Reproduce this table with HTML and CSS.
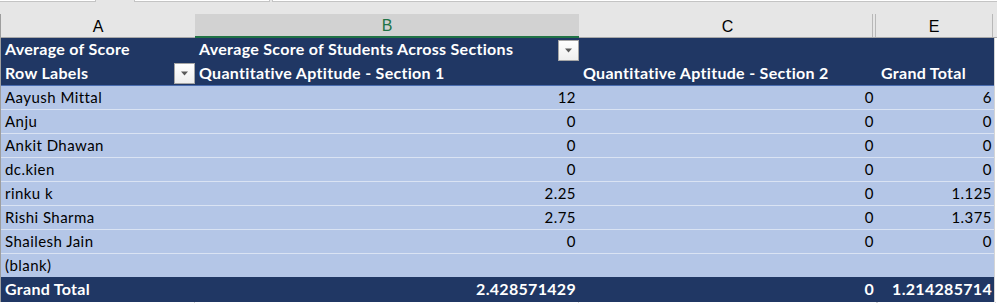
FILE: index.html
```html
<!DOCTYPE html>
<html>
<head>
<meta charset="utf-8">
<link rel="stylesheet" href="styles.css">
</head>
<body>
<div class="sheet">
  <div class="topstrip">
    <span class="tab t1"></span><span class="tabgap g1"></span><span class="tab t2"></span><span class="tabgap g2"></span><span class="tab t3"></span>
  </div>
  <div class="colheads">
    <div class="ch ca">A</div>
    <div class="ch cb sel">B</div>
    <div class="ch cc">C</div>
    <div class="ch cd"></div>
    <div class="ch ce">E</div>
    <div class="ch crest"></div>
  </div>
  <div class="pivot">
    <div class="row head">
      <div class="cell a">Average of Score</div>
      <div class="cell b split"><span class="lbl">Average Score of Students Across Sections</span><span class="dd"><svg width="9" height="5" viewBox="0 0 9 5"><path d="M1 0.5 L8 0.5 L4.5 4.5 Z" fill="#5a5a5a"/></svg></span></div>
      <div class="cell c"></div>
      <div class="cell e"></div>
    </div>
    <div class="row head head2">
      <div class="cell a split"><span class="lbl">Row Labels</span><span class="dd"><svg width="9" height="5" viewBox="0 0 9 5"><path d="M1 0.5 L8 0.5 L4.5 4.5 Z" fill="#5a5a5a"/></svg></span></div>
      <div class="cell b">Quantitative Aptitude - Section 1</div>
      <div class="cell c">Quantitative Aptitude - Section 2</div>
      <div class="cell e">Grand Total</div>
    </div>
    <div class="row data">
      <div class="cell a">Aayush Mittal</div><div class="cell b num">12</div><div class="cell c num">0</div><div class="cell e num">6</div>
    </div>
    <div class="row data">
      <div class="cell a">Anju</div><div class="cell b num">0</div><div class="cell c num">0</div><div class="cell e num">0</div>
    </div>
    <div class="row data">
      <div class="cell a">Ankit Dhawan</div><div class="cell b num">0</div><div class="cell c num">0</div><div class="cell e num">0</div>
    </div>
    <div class="row data">
      <div class="cell a">dc.kien</div><div class="cell b num">0</div><div class="cell c num">0</div><div class="cell e num">0</div>
    </div>
    <div class="row data">
      <div class="cell a">rinku k</div><div class="cell b num">2.25</div><div class="cell c num">0</div><div class="cell e num">1.125</div>
    </div>
    <div class="row data">
      <div class="cell a">Rishi Sharma</div><div class="cell b num">2.75</div><div class="cell c num">0</div><div class="cell e num">1.375</div>
    </div>
    <div class="row data">
      <div class="cell a">Shailesh Jain</div><div class="cell b num">0</div><div class="cell c num">0</div><div class="cell e num">0</div>
    </div>
    <div class="row data last">
      <div class="cell a">(blank)</div><div class="cell b num"></div><div class="cell c num"></div><div class="cell e num"></div>
    </div>
    <div class="row total">
      <div class="cell a">Grand Total</div><div class="cell b num">2.428571429</div><div class="cell c num">0</div><div class="cell e num">1.214285714</div>
    </div>
  </div>
  <div class="below">
    <div class="ba"></div><div class="bb"></div><div class="bc"></div><div class="bd"></div><div class="be"></div>
  </div>
</div>
</body>
</html>
```

FILE: styles.css
```css
html, body {
  margin: 0;
  padding: 0;
  background: #ffffff;
}
.sheet {
  width: 997px;
  height: 303px;
  overflow: hidden;
  font-family: "Lato", "Open Sans", sans-serif;
  font-size: 15px;
  letter-spacing: 0.45px;
  color: #000;
}
.topstrip {
  display: flex;
  height: 14px;
  background: #e6e6e6;
}
.tab {
  height: 1px;
  background: #ffffff;
  border: 1px solid #c4c4c4;
  border-top: none;
}
.t1 { width: 95px; border-left: none; }
.g1 { width: 38px; }
.t2 { width: 134px; }
.g2 { width: 2px; }
.t3 { flex: 1; border-right: none; }
.colheads {
  display: flex;
  height: 23px;
  background: #e6e6e6;
  border-bottom: 1px solid #a8a8a8;
  border-left: 1px solid #9e9e9e;
  font-family: "Liberation Sans", Arial, sans-serif;
  font-size: 16px;
  letter-spacing: 0;
}
.ch {
  display: flex;
  align-items: center;
  justify-content: center;
  padding-top: 2px;
  box-sizing: border-box;
}
.ca { width: 194px; }
.cb { width: 384px; }
.sel {
  background: #d2d2d2;
  color: #217346;
  border-bottom: 2px solid #217346;
  margin-bottom: -1px;
}
.cc { width: 294px; border-right: 1px solid #b8b8b8; padding-left: 4px; }
.cd { width: 3px; border-right: 1px solid #b8b8b8; }
.ce { width: 117px; border-right: 1px solid #b8b8b8; }
.crest { flex: 1; }
.pivot {
  width: 995px;
  border-left: 1px solid #9e9e9e;
  box-sizing: border-box;
  border-right: 1px solid #d4d4d4;
}
.row {
  display: grid;
  grid-template-columns: 194px 384px 298px 118px;
  height: 24px;
  box-sizing: border-box;
}
.head, .total {
  background: #203764;
  color: #ffffff;
  font-weight: 700;
  font-size: 16px;
  letter-spacing: 0.3px;
}
.cell {
  display: flex;
  align-items: center;
  padding: 0 4px 2px 4px;
  white-space: nowrap;
  overflow: hidden;
  min-width: 0;
}
.head .cell, .total .cell {
  padding-bottom: 4px;
}
.head2 {
  border-bottom: 1px solid #4a6db0;
}
.head2 .cell {
  padding-bottom: 3px;
}
.data {
  background: #b4c6e7;
  border-bottom: 1px solid #dae3f3;
}
.data.last {
  border-bottom-color: #203764;
}
.num {
  justify-content: flex-end;
  padding-right: 3px;
}
.head .split {
  justify-content: space-between;
  padding-right: 0;
  padding-bottom: 0;
}
.head .split .lbl {
  padding-bottom: 4px;
}
.head2 .split .lbl {
  padding-bottom: 3px;
}
.dd {
  width: 19px;
  height: 19px;
  border: 1px solid #a6a6a6;
  background: linear-gradient(#ffffff, #eeeeee);
  display: flex;
  align-items: center;
  justify-content: center;
  flex: none;
}
.below {
  display: flex;
  height: 2px;
}
.below div { border-right: 1px solid #d4d4d4; box-sizing: border-box; }
.ba { width: 195px; }
.bb { width: 384px; }
.bc { width: 298px; }
.be { width: 118px; }
.bd { width: 0; }
```
